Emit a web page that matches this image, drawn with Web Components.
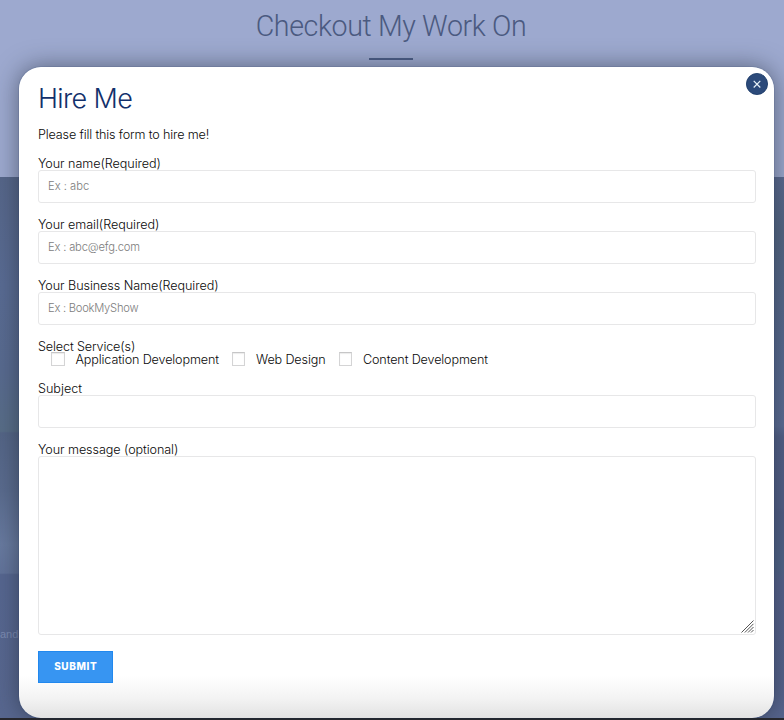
<!DOCTYPE html>
<html lang="en">
<head>
<meta charset="utf-8">
<title>Hire Me</title>
<style>
html,body{margin:0;width:784px;height:720px;overflow:hidden}
body{font-family:Inter,"Liberation Sans",sans-serif;font-weight:300;font-size:12.6px;color:#080808;position:relative}
</style>
</head>
<body>
<page-backdrop heading="Checkout My Work On"></page-backdrop>
<modal-dialog heading="Hire Me" intro="Please fill this form to hire me!">
  <form-field label="Your name(Required)" hint="Ex : abc" style="--ls:-.06px;--hs:0px"></form-field>
  <form-field label="Your email(Required)" hint="Ex : abc@efg.com" style="--ls:-.06px;--hs:-.18px"></form-field>
  <form-field label="Your Business Name(Required)" hint="Ex : BookMyShow" style="--ls:-.07px;--hs:-.25px"></form-field>
  <service-group label="Select Service(s)">
    <check-option style="width:180.5px">Application Development</check-option>
    <check-option style="width:107px">Web Design</check-option>
    <check-option>Content Development</check-option>
  </service-group>
  <form-field label="Subject" style="--ls:0px"></form-field>
  <form-field label="Your message (optional)" multiline style="--ls:-.08px"></form-field>
  <submit-button>SUBMIT</submit-button>
</modal-dialog>
<script>
const define = (name, render) => customElements.define(name, class extends HTMLElement {
  constructor() {
    super();
    this.attachShadow({ mode: 'open' }).innerHTML = render(this);
  }
});

define('page-backdrop', el => `
<style>
:host{position:absolute;inset:0;display:flex;flex-direction:column;background:#9da9cf}
header{height:177px;flex:none;display:flex;flex-direction:column;align-items:center}
h2{margin:9px 0 0;font:300 28.6px/34px Roboto,sans-serif;letter-spacing:-.38px;color:#4b5a80;padding-right:2px;white-space:nowrap}
hr{width:44px;height:2px;border:0;margin:15px 0 0;background:#4b5c86;transform:translateX(-1px)}
main{flex:1;display:flex;justify-content:space-between}
.left{width:40px;background:linear-gradient(#566689 0,#596b93 20%,#586a8f 36%,#586d87 47%,#546586 47.3%,#5a6b8e 58%,#687a9f 68%,#62739a 73.2%,#566690 73.5%,#58678f 100%)}
.left p{margin:449px 0 0;font:11px/16px "Liberation Sans",sans-serif;color:#7c8bb2}
.right{width:40px;background:linear-gradient(#5b6a91,#556785 10%,#586a90 30%,#5c6d96 46%,#536189 48%,#536088 61%,#515e86 62%,#51658a 72%,#56628d 75%,#57658e)}
footer{height:2px;background:#28282d}
</style>
<header><h2>${el.getAttribute('heading')}</h2><hr></header>
<main><div class="left"><p>and</p></div><div class="right"></div></main>
<footer></footer>`);

define('modal-dialog', el => `
<style>
:host{position:absolute;left:19px;top:67px;width:755px;height:651px;box-sizing:border-box;padding:15px 18px 0 19px;
 border-radius:22px;background:linear-gradient(#fff 0,#fff 93.5%,#f3f3f3 97%,#e2e2e2 100%);
 box-shadow:0 0 1px #14315f,0 0 24px rgba(30,38,50,.55);display:flex;flex-direction:column}
h1{margin:0;font-weight:300;font-size:27px;line-height:34px;color:#12306b;letter-spacing:-.65px}
p{margin:11px 0 14px;line-height:15px;letter-spacing:-.15px}
.fields{display:flex;flex-direction:column;gap:14px;align-items:stretch}
close-button{position:absolute;right:6px;top:6px}
</style>
<h1>${el.getAttribute('heading')}</h1><p>${el.getAttribute('intro')}</p>
<close-button></close-button>
<div class="fields"><slot></slot></div>`);

define('close-button', () => `
<style>
:host{display:block;width:22px;height:22px}
svg{display:block}
</style>
<svg width="22" height="22" viewBox="0 0 22 22"><circle cx="11" cy="11" r="10.6" fill="#2c4a7a" stroke="#173664" stroke-width=".8"/><path d="M7.7 7.9l6.6 6.6M14.3 7.9l-6.6 6.6" stroke="#e8f2f8" stroke-width="1.2" fill="none"/></svg>`);

define('form-field', el => {
  const multi = el.hasAttribute('multiline');
  return `
<style>
:host{display:block}
label{display:block;height:14px;line-height:16px;white-space:nowrap;letter-spacing:var(--ls,-.13px)}
.box{box-sizing:border-box;height:${multi ? 179 : 33}px;border:1px solid #e7e7e8;border-radius:3px;padding:0 9px;
 font-size:11.2px;line-height:30px;color:#7c7c7c;letter-spacing:var(--hs,0);display:flex;justify-content:flex-end;align-items:flex-end}
.box span{flex:1;align-self:flex-start}
svg{margin:0 -9px 0 0}
</style>
<label>${el.getAttribute('label')}</label>
<div class="box"><span>${el.getAttribute('hint') || ''}</span>${multi ? '<svg width="14" height="14" viewBox="0 0 14 14"><path d="M.5 12.5L12.5.5M3.8 12.5l8.7-8.7M7 12.5l5.5-5.5M10 12.5l2.5-2.5" stroke="#555" stroke-width="1" fill="none"/></svg>' : ''}</div>`;
});

define('service-group', el => `
<style>
:host{display:block;margin-bottom:1px;line-height:16px;letter-spacing:-.13px}
.caption{height:14px}
.row{display:flex;height:13px;padding-left:13px}
</style>
<div class="caption">${el.getAttribute('label')}</div><div class="row"><slot></slot></div>`);

define('check-option', () => `
<style>
:host{display:flex;align-items:flex-start;gap:11px;height:13px;margin-top:-1px;white-space:nowrap;flex:none}
i{box-sizing:border-box;width:13.5px;height:14px;flex:none;background:#fff;border:1px solid #d4d4d5;border-top-color:#c6c6c7;box-shadow:inset 0 1px 1px #ececec}
</style>
<i></i><span><slot></slot></span>`);

define('submit-button', () => `
<style>
:host{display:flex;align-items:center;justify-content:center;box-sizing:border-box;width:74.5px;height:32px;margin-top:2px;padding:0 0 2px 1px;
 background:#3795f2;border:1px solid #2188ee;color:#fff;font:800 10px/12px Inter,"Liberation Sans",sans-serif;letter-spacing:.6px}
</style>
<slot></slot>`);
</script>
</body>
</html>
